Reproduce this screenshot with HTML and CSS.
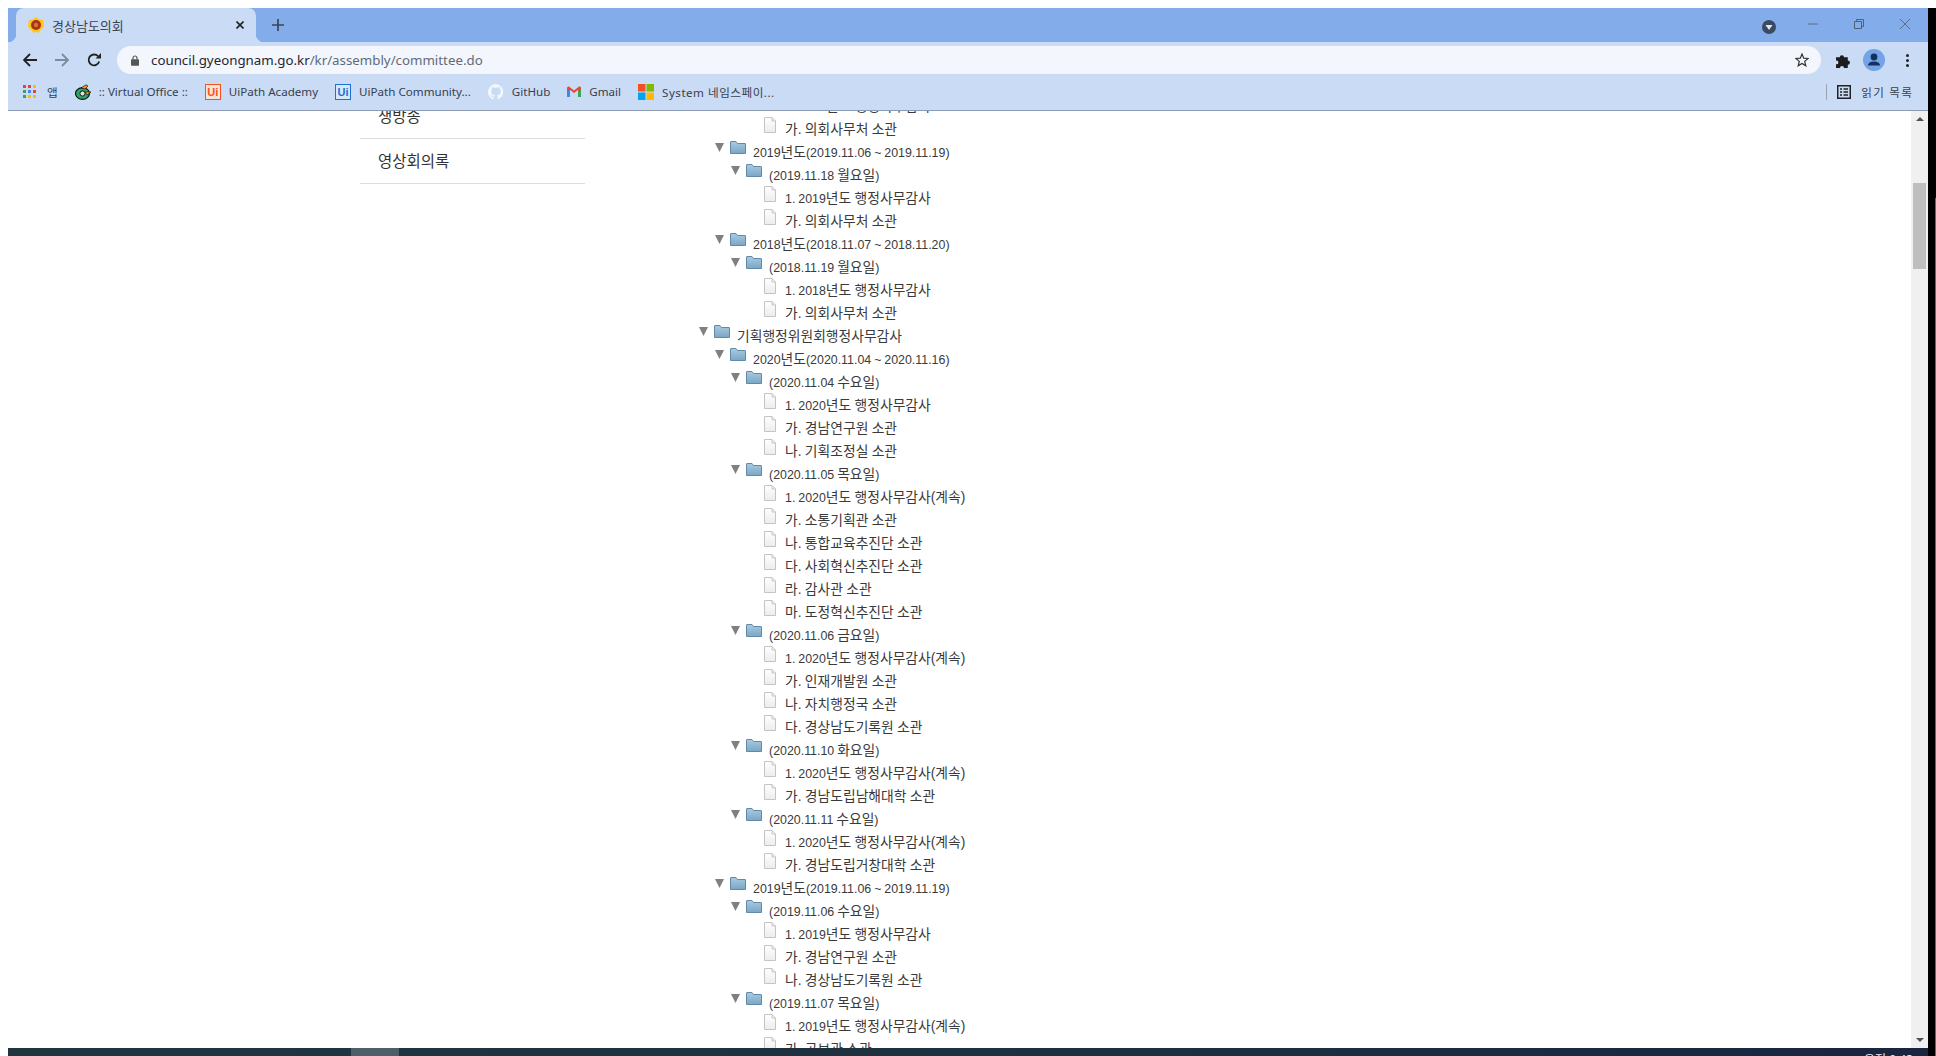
FILE: index.html
```html
<!DOCTYPE html>
<html lang="ko">
<head>
    <meta charset="UTF-8">
    <title>경상남도의회</title>
    <link rel="stylesheet" href="styles.css">
</head>
<body>
    <svg class="defs" width="0" height="0">
        <defs>
            <linearGradient id="folderFill" x1="0" y1="0" x2="0" y2="1">
                <stop offset="0" stop-color="#a9cbe0"/>
                <stop offset="1" stop-color="#7ba6c4"/>
            </linearGradient>
            <linearGradient id="fileFill" x1="0" y1="0" x2="0" y2="1">
                <stop offset="0" stop-color="#ffffff"/>
                <stop offset="1" stop-color="#ececec"/>
            </linearGradient>
            <symbol id="arrow" viewBox="0 0 9 9">
                <path d="M0 0H9L4.5 9Z" fill="#808080"/>
            </symbol>
            <symbol id="folder" viewBox="0 0 16 13">
                <path d="M.5 12.5V1Q.5.5 1 .5H6L7.5 2.5H15Q15.5 2.5 15.5 3V12.5Z" fill="url(#folderFill)" stroke="#5f8aa8"/>
            </symbol>
            <symbol id="file" viewBox="0 0 12 16">
                <path d="M.5.5H8L11.5 4V15.5H.5Z" fill="url(#fileFill)" stroke="#c4c4c4"/>
                <path d="M8 .5V4H11.5" fill="none" stroke="#c4c4c4"/>
            </symbol>
        </defs>
    </svg>

    <div class="frame">
        <div class="browser">
            <!-- 탭 -->
            <div class="tabstrip">
                <div class="tab">
                    <svg class="favicon" viewBox="0 0 16 16">
                        <path d="M8 0L11 2.2 15 3 15.6 7 16 10 12.5 13 10.5 15.8 8 15 5.5 15.8 3.5 13 0 10 .4 7 1 3 5 2.2Z" fill="#fdc90f"/>
                        <circle cx="8" cy="8" r="5" fill="#a8321e"/>
                        <circle cx="8" cy="8" r="2.2" fill="#d8762a"/>
                    </svg>
                    <span class="tab-title">경상남도의회</span>
                    <svg class="tab-close" viewBox="0 0 8 8"><path d="M.5.5L7.5 7.5M7.5.5L.5 7.5" stroke="#222" stroke-width="1.6"/></svg>
                </div>
                <svg class="tab-new" viewBox="0 0 12 12"><path d="M6 0V12M0 6H12" stroke="#3a4555" stroke-width="1.7"/></svg>
                <div class="win-btns">
                    <svg class="profile-drop" viewBox="0 0 14 14"><circle cx="7" cy="7" r="7" fill="#3c4a61"/><path d="M3.5 5H10.5L7 10Z" fill="#dfe8f8"/></svg>
                    <svg class="win-min" viewBox="0 0 10 10"><path d="M0 5H10" stroke="#5a6b85"/></svg>
                    <svg class="win-max" viewBox="0 0 10 10"><path d="M2.5 2.5V.5H9.5V7.5H7.5M.5 2.5H7.5V9.5H.5Z" fill="none" stroke="#4f6078"/></svg>
                    <svg class="win-close" viewBox="0 0 10 10"><path d="M0 0L10 10M10 0L0 10" stroke="#5a6b85"/></svg>
                </div>
            </div>

            <!-- 주소창 -->
            <div class="toolbar">
                <svg class="nav-icon" viewBox="0 0 14 14"><path d="M14 7H1.5M7 1L1 7L7 13" fill="none" stroke="#222" stroke-width="1.8"/></svg>
                <svg class="nav-icon" viewBox="0 0 14 14"><path d="M0 7H12.5M7 1L13 7L7 13" fill="none" stroke="#7f8b9c" stroke-width="1.8"/></svg>
                <svg class="nav-icon" viewBox="0 0 14 14"><path d="M12.2 8.5A5.4 5.4 0 1 1 11 3.2" fill="none" stroke="#222" stroke-width="1.8"/><path d="M8.6 5.4H14V0Z" fill="#222"/></svg>
                <div class="omnibox">
                    <svg class="lock" viewBox="0 0 8 11"><path d="M2 4.5V3A2 2 0 0 1 6 3V4.5" fill="none" stroke="#555" stroke-width="1.2"/><rect y="4.2" width="8" height="6.5" rx=".8" fill="#555"/></svg>
                    <span class="url"><b>council.gyeongnam.go.kr</b>/kr/assembly/committee.do</span>
                    <svg class="star" viewBox="0 0 14 14"><path d="M7 1L8.7 5.2 13.2 5.5 9.7 8.4 10.8 12.8 7 10.4 3.2 12.8 4.3 8.4.8 5.5 5.3 5.2Z" fill="none" stroke="#333" stroke-width="1.2"/></svg>
                </div>
                <svg class="puzzle" viewBox="0 0 14 14"><path d="M0 4H3.5A2 2 0 1 1 7.5 4H11V7A2 2 0 1 1 11 11V14H7.5A1.8 1.8 0 1 0 3.7 14H0V10.5A1.8 1.8 0 1 0 0 7Z" fill="#1c1c1c"/></svg>
                <svg class="avatar" viewBox="0 0 22 22"><circle cx="11" cy="11" r="11" fill="#74a4e6"/><circle cx="11" cy="8" r="3.4" fill="#12315e"/><path d="M4.8 16.5Q5.5 12.6 11 12.6T17.2 16.5Z" fill="#12315e"/></svg>
                <svg class="dots" viewBox="0 0 3 13"><circle cx="1.5" cy="1.5" r="1.5" fill="#222"/><circle cx="1.5" cy="6.5" r="1.5" fill="#222"/><circle cx="1.5" cy="11.5" r="1.5" fill="#222"/></svg>
            </div>

            <!-- 북마크 -->
            <div class="bookmarks">
                <div class="bm">
                    <svg class="bm-apps" viewBox="0 0 13 13">
                        <rect width="3" height="3" fill="#ea4335"/><rect x="5" width="3" height="3" fill="#ea4335"/><rect x="10" width="3" height="3" fill="#fbbc05"/>
                        <rect y="5" width="3" height="3" fill="#34a853"/><rect x="5" y="5" width="3" height="3" fill="#4285f4"/><rect x="10" y="5" width="3" height="3" fill="#ea4335"/>
                        <rect y="10" width="3" height="3" fill="#34a853"/><rect x="5" y="10" width="3" height="3" fill="#fbbc05"/><rect x="10" y="10" width="3" height="3" fill="#fbbc05"/>
                    </svg>
                    <span class="bm-label bm-apps-label">앱</span>
                </div>
                <div class="bm">
                    <svg class="bm-icon" viewBox="0 0 16 16">
                        <ellipse cx="7.5" cy="9.5" rx="7" ry="5.8" fill="#2da66b" stroke="#111" stroke-width="1.2"/>
                        <circle cx="7.5" cy="9.5" r="2.6" fill="#cfe8d8" stroke="#111"/>
                        <path d="M6 4L11 .8 13 2 10 5Z" fill="#f29a1f" stroke="#111" stroke-width=".7"/>
                        <path d="M10 8H16L12 11Z" fill="#f2b01f" stroke="#111" stroke-width=".7"/>
                    </svg>
                    <span class="bm-label">:: Virtual Office ::</span>
                </div>
                <div class="bm">
                    <span class="ui-logo ui-orange">Ui</span>
                    <span class="bm-label">UiPath Academy</span>
                </div>
                <div class="bm">
                    <span class="ui-logo ui-blue">Ui</span>
                    <span class="bm-label">UiPath Community...</span>
                </div>
                <div class="bm">
                    <svg class="bm-icon" viewBox="0 0 16 16"><path d="M8 0A8 8 0 0 0 5.5 15.6V13.2C3.5 13.6 3 12.3 2.7 11.6 2.5 11.2 2 10.7 2.6 10.7 3.4 10.7 3.9 11.5 4.1 11.8 5 13.2 6 12.8 6.5 12.5 6.6 11.9 6.8 11.6 7 11.3 5 11.1 3.2 10.2 3.2 7.2 3.2 6.3 3.5 5.6 4 5 3.9 4.8 3.7 4 4.1 3 4.1 3 4.8 2.8 6.3 3.8A7 7 0 0 1 9.7 3.8C11.2 2.8 11.9 3 11.9 3 12.3 4 12.1 4.8 12 5 12.5 5.6 12.8 6.3 12.8 7.2 12.8 10.2 11 11.1 9 11.3 9.3 11.6 9.6 12.1 9.6 12.9V15.6A8 8 0 0 0 8 0Z" fill="#f4f7fc"/></svg>
                    <span class="bm-label">GitHub</span>
                </div>
                <div class="bm">
                    <svg class="bm-icon bm-gmail" viewBox="0 0 14 11">
                        <path d="M0 2V11H3V4Z" fill="#4285f4"/>
                        <path d="M14 2V11H11V4Z" fill="#34a853"/>
                        <path d="M0 1.5L1.5.2 7 4.5 12.5.2 14 1.5V3L11 5V3.8L7 7 3 3.8V5L0 3Z" fill="#ea4335"/>
                    </svg>
                    <span class="bm-label">Gmail</span>
                </div>
                <div class="bm">
                    <svg class="bm-icon" viewBox="0 0 16 16">
                        <rect width="7.5" height="7.5" fill="#f25022"/><rect x="8.5" width="7.5" height="7.5" fill="#7fba00"/>
                        <rect y="8.5" width="7.5" height="7.5" fill="#00a4ef"/><rect x="8.5" y="8.5" width="7.5" height="7.5" fill="#ffb900"/>
                    </svg>
                    <span class="bm-label bm-wide">System 네임스페이...</span>
                </div>
                <div class="reading">
                    <svg class="bm-reading" viewBox="0 0 14 14"><path d="M.75.75H13.25V13.25H.75Z" fill="none" stroke="#222" stroke-width="1.5"/><path d="M3 4H5M6.5 4H11M3 7H5M6.5 7H11M3 10H5M6.5 10H11" stroke="#222" stroke-width="1.4"/></svg>
                    <span class="bm-label bm-wider">읽기 목록</span>
                </div>
            </div>

            <!-- 페이지 -->
            <div class="viewport">
                <div class="page">
                    <div class="content">
                        <ul class="side-menu">
                            <li>생방송</li>
                            <li>영상회의록</li>
                        </ul>
                        <div class="tree">
                            <div class="node lvl-3"><svg class="ico-file"><use href="#file"/></svg><span><b>1. 2020</b>년도 행정사무감사</span></div>
                            <div class="node lvl-3"><svg class="ico-file"><use href="#file"/></svg><span>가. 의회사무처 소관</span></div>
                            <div class="node lvl-1"><svg class="ico-arrow"><use href="#arrow"/></svg><svg class="ico-folder"><use href="#folder"/></svg><span><b>2019</b>년도<b>(2019.11.06 ~ 2019.11.19)</b></span></div>
                            <div class="node lvl-2"><svg class="ico-arrow"><use href="#arrow"/></svg><svg class="ico-folder"><use href="#folder"/></svg><span><b>(2019.11.18 </b>월요일<b>)</b></span></div>
                            <div class="node lvl-3"><svg class="ico-file"><use href="#file"/></svg><span><b>1. 2019</b>년도 행정사무감사</span></div>
                            <div class="node lvl-3"><svg class="ico-file"><use href="#file"/></svg><span>가. 의회사무처 소관</span></div>
                            <div class="node lvl-1"><svg class="ico-arrow"><use href="#arrow"/></svg><svg class="ico-folder"><use href="#folder"/></svg><span><b>2018</b>년도<b>(2018.11.07 ~ 2018.11.20)</b></span></div>
                            <div class="node lvl-2"><svg class="ico-arrow"><use href="#arrow"/></svg><svg class="ico-folder"><use href="#folder"/></svg><span><b>(2018.11.19 </b>월요일<b>)</b></span></div>
                            <div class="node lvl-3"><svg class="ico-file"><use href="#file"/></svg><span><b>1. 2018</b>년도 행정사무감사</span></div>
                            <div class="node lvl-3"><svg class="ico-file"><use href="#file"/></svg><span>가. 의회사무처 소관</span></div>
                            <div class="node lvl-0"><svg class="ico-arrow"><use href="#arrow"/></svg><svg class="ico-folder"><use href="#folder"/></svg><span>기획행정위원회행정사무감사</span></div>
                            <div class="node lvl-1"><svg class="ico-arrow"><use href="#arrow"/></svg><svg class="ico-folder"><use href="#folder"/></svg><span><b>2020</b>년도<b>(2020.11.04 ~ 2020.11.16)</b></span></div>
                            <div class="node lvl-2"><svg class="ico-arrow"><use href="#arrow"/></svg><svg class="ico-folder"><use href="#folder"/></svg><span><b>(2020.11.04 </b>수요일<b>)</b></span></div>
                            <div class="node lvl-3"><svg class="ico-file"><use href="#file"/></svg><span><b>1. 2020</b>년도 행정사무감사</span></div>
                            <div class="node lvl-3"><svg class="ico-file"><use href="#file"/></svg><span>가. 경남연구원 소관</span></div>
                            <div class="node lvl-3"><svg class="ico-file"><use href="#file"/></svg><span>나. 기획조정실 소관</span></div>
                            <div class="node lvl-2"><svg class="ico-arrow"><use href="#arrow"/></svg><svg class="ico-folder"><use href="#folder"/></svg><span><b>(2020.11.05 </b>목요일<b>)</b></span></div>
                            <div class="node lvl-3"><svg class="ico-file"><use href="#file"/></svg><span><b>1. 2020</b>년도 행정사무감사(계속)</span></div>
                            <div class="node lvl-3"><svg class="ico-file"><use href="#file"/></svg><span>가. 소통기획관 소관</span></div>
                            <div class="node lvl-3"><svg class="ico-file"><use href="#file"/></svg><span>나. 통합교육추진단 소관</span></div>
                            <div class="node lvl-3"><svg class="ico-file"><use href="#file"/></svg><span>다. 사회혁신추진단 소관</span></div>
                            <div class="node lvl-3"><svg class="ico-file"><use href="#file"/></svg><span>라. 감사관 소관</span></div>
                            <div class="node lvl-3"><svg class="ico-file"><use href="#file"/></svg><span>마. 도정혁신추진단 소관</span></div>
                            <div class="node lvl-2"><svg class="ico-arrow"><use href="#arrow"/></svg><svg class="ico-folder"><use href="#folder"/></svg><span><b>(2020.11.06 </b>금요일<b>)</b></span></div>
                            <div class="node lvl-3"><svg class="ico-file"><use href="#file"/></svg><span><b>1. 2020</b>년도 행정사무감사(계속)</span></div>
                            <div class="node lvl-3"><svg class="ico-file"><use href="#file"/></svg><span>가. 인재개발원 소관</span></div>
                            <div class="node lvl-3"><svg class="ico-file"><use href="#file"/></svg><span>나. 자치행정국 소관</span></div>
                            <div class="node lvl-3"><svg class="ico-file"><use href="#file"/></svg><span>다. 경상남도기록원 소관</span></div>
                            <div class="node lvl-2"><svg class="ico-arrow"><use href="#arrow"/></svg><svg class="ico-folder"><use href="#folder"/></svg><span><b>(2020.11.10 </b>화요일<b>)</b></span></div>
                            <div class="node lvl-3"><svg class="ico-file"><use href="#file"/></svg><span><b>1. 2020</b>년도 행정사무감사(계속)</span></div>
                            <div class="node lvl-3"><svg class="ico-file"><use href="#file"/></svg><span>가. 경남도립남해대학 소관</span></div>
                            <div class="node lvl-2"><svg class="ico-arrow"><use href="#arrow"/></svg><svg class="ico-folder"><use href="#folder"/></svg><span><b>(2020.11.11 </b>수요일<b>)</b></span></div>
                            <div class="node lvl-3"><svg class="ico-file"><use href="#file"/></svg><span><b>1. 2020</b>년도 행정사무감사(계속)</span></div>
                            <div class="node lvl-3"><svg class="ico-file"><use href="#file"/></svg><span>가. 경남도립거창대학 소관</span></div>
                            <div class="node lvl-1"><svg class="ico-arrow"><use href="#arrow"/></svg><svg class="ico-folder"><use href="#folder"/></svg><span><b>2019</b>년도<b>(2019.11.06 ~ 2019.11.19)</b></span></div>
                            <div class="node lvl-2"><svg class="ico-arrow"><use href="#arrow"/></svg><svg class="ico-folder"><use href="#folder"/></svg><span><b>(2019.11.06 </b>수요일<b>)</b></span></div>
                            <div class="node lvl-3"><svg class="ico-file"><use href="#file"/></svg><span><b>1. 2019</b>년도 행정사무감사</span></div>
                            <div class="node lvl-3"><svg class="ico-file"><use href="#file"/></svg><span>가. 경남연구원 소관</span></div>
                            <div class="node lvl-3"><svg class="ico-file"><use href="#file"/></svg><span>나. 경상남도기록원 소관</span></div>
                            <div class="node lvl-2"><svg class="ico-arrow"><use href="#arrow"/></svg><svg class="ico-folder"><use href="#folder"/></svg><span><b>(2019.11.07 </b>목요일<b>)</b></span></div>
                            <div class="node lvl-3"><svg class="ico-file"><use href="#file"/></svg><span><b>1. 2019</b>년도 행정사무감사(계속)</span></div>
                            <div class="node lvl-3"><svg class="ico-file"><use href="#file"/></svg><span>가. 공보관 소관</span></div>
                        </div>
                    </div>
                </div>
                <div class="scrollbar">
                    <span class="sb-up"></span>
                    <div class="sb-track"><div class="sb-thumb"></div></div>
                    <span class="sb-down"></span>
                </div>
            </div>

            <div class="taskbar">
                <div class="task-active"></div>
                <span class="clock">오전 9:43</span>
            </div>
        </div>
        <div class="screen-edge"></div>
    </div>
</body>
</html>
```

FILE: styles.css
```css
* {
    box-sizing: border-box;
}

html, body {
    height: 100%;
}

body {
    margin: 0;
    background-color: white;
    overflow: hidden;
    font-family: "Noto Sans", "Noto Sans CJK KR", sans-serif;
}

ul {
    margin: 0;
    padding: 0;
    list-style: none;
}

svg {
    display: block;
    flex: none;
}

.defs {
    position: absolute;
}

.frame {
    display: flex;
    height: 100%;
    padding: 8px 0 0 8px;
}

.browser {
    display: flex;
    flex-direction: column;
    width: 1920px;
    height: 1048px;
}

/* 탭 */
.tabstrip {
    display: flex;
    align-items: center;
    height: 34px;
    padding-left: 8px;
    background-color: #83acea;
}

.tab {
    position: relative;
    display: flex;
    align-items: center;
    width: 240px;
    height: 34px;
    padding-left: 12px;
    border-radius: 8px 8px 0 0;
    background-color: #cadbf6;
}

.tab::before,
.tab::after {
    content: "";
    position: absolute;
    bottom: 0;
    width: 8px;
    height: 8px;
}

.tab::before {
    left: -8px;
    background: radial-gradient(circle at 0 0, transparent 8px, #cadbf6 8.5px);
}

.tab::after {
    right: -8px;
    background: radial-gradient(circle at 100% 0, transparent 8px, #cadbf6 8.5px);
}

.favicon {
    width: 16px;
    height: 16px;
}

.tab-title {
    width: 184px;
    margin-left: 8px;
    font-size: 13px;
    color: #3c4350;
}

.tab-close {
    width: 8px;
    height: 8px;
}

.tab-new {
    width: 12px;
    height: 12px;
    margin-left: 16px;
}

.win-btns {
    display: flex;
    align-items: center;
    margin-left: auto;
    padding-right: 18px;
}

.profile-drop {
    width: 14px;
    height: 14px;
    margin-right: 32px;
    margin-top: 3px;
}

.win-min,
.win-max,
.win-close {
    width: 10px;
    height: 10px;
    margin-top: -3px;
}

.win-min,
.win-max {
    margin-right: 36px;
}

/* 주소창 */
.toolbar {
    display: flex;
    align-items: center;
    height: 36px;
    padding-left: 15px;
    background-color: #cadbf6;
}

.nav-icon {
    width: 14px;
    height: 14px;
    margin-right: 18px;
}

.omnibox {
    display: flex;
    align-items: center;
    width: 1704px;
    height: 28px;
    margin-left: -2px;
    padding: 0 12px 0 14px;
    border-radius: 14px;
    background-color: #f3f6fc;
}

.lock {
    width: 8px;
    height: 11px;
}

.url {
    margin-left: 12px;
    font-size: 13.3px;
    color: #5f6b7a;
}

.url b {
    font-weight: normal;
    color: #1f2630;
}

.star {
    width: 14px;
    height: 14px;
    margin-left: auto;
}

.puzzle {
    width: 15px;
    height: 15px;
    margin-left: 15px;
}

.avatar {
    width: 22px;
    height: 22px;
    margin-left: 12px;
}

.dots {
    width: 3px;
    height: 13px;
    margin-left: 21px;
}

/* 북마크 */
.bookmarks {
    display: flex;
    align-items: center;
    gap: 17px;
    height: 33px;
    padding: 0 0 5px 15px;
    border-bottom: 1px solid #8f9bb0;
    background-color: #cadbf6;
}

.bm {
    display: flex;
    align-items: center;
    gap: 8px;
}

.bm-apps {
    width: 13px;
    height: 13px;
}

.bm-apps-label {
    margin-left: 3px;
}

.bm-icon {
    width: 16px;
    height: 16px;
}

.bm-gmail {
    width: 14px;
    height: 11px;
}

.bm-label {
    font-size: 11.6px;
    color: #38404c;
}

.bm-wide {
    letter-spacing: .5px;
}

.bm-wider {
    letter-spacing: 1.2px;
}

.ui-logo {
    display: flex;
    align-items: center;
    justify-content: center;
    width: 16px;
    height: 16px;
    border: 1.5px solid;
    font-family: "Liberation Sans", sans-serif;
    font-size: 11px;
    font-weight: bold;
}

.ui-orange {
    color: #f4511e;
    background-color: #fbe3d8;
}

.ui-blue {
    color: #1f6fd8;
    background-color: #d8e8fb;
}

.reading {
    display: flex;
    align-items: center;
    gap: 10px;
    height: 16px;
    margin-left: auto;
    padding-left: 10px;
    padding-right: 15px;
    border-left: 1px solid #98a4b6;
}

.bm-reading {
    width: 14px;
    height: 14px;
}

/* 페이지 */
.viewport {
    display: flex;
    height: 937px;
    background-color: white;
}

.page {
    flex: 1;
    overflow: hidden;
}

.content {
    display: flex;
    margin-top: -17px;
    padding-left: 352px;
}

.side-menu {
    width: 225px;
    font-size: 15.5px;
    color: #333;
}

.side-menu li {
    display: flex;
    align-items: center;
    height: 45px;
    padding: 0 0 2px 18px;
    border-bottom: 1px solid #ddd;
}

.tree {
    padding-left: 114px;
    font-family: "Liberation Sans", "Noto Sans CJK KR", sans-serif;
    font-size: 13.8px;
    word-spacing: -.5px;
    color: #3a3a3a;
}

.node {
    display: flex;
    align-items: center;
    height: 23px;
    white-space: nowrap;
}

.node span {
    margin-bottom: 2px;
    margin-left: 7px;
}

/* 숫자는 한글보다 작게 */
.node b {
    font-size: 12.4px;
    font-weight: normal;
}

.lvl-1 {
    padding-left: 16px;
}

.lvl-2 {
    padding-left: 32px;
}

.lvl-3 {
    padding-left: 65px;
}

.ico-arrow {
    width: 9px;
    height: 9px;
    margin-right: 6px;
    margin-bottom: 9px;
}

.ico-folder {
    width: 16px;
    height: 13px;
    margin-bottom: 8px;
}

.ico-file {
    width: 12px;
    height: 16px;
    margin-bottom: 8px;
}

.ico-file + span {
    margin-left: 9px;
}

/* 스크롤바 */
.scrollbar {
    display: flex;
    flex-direction: column;
    align-items: center;
    width: 17px;
    background-color: #f0f0f0;
}

.sb-up,
.sb-down {
    flex: none;
    width: 0;
    height: 0;
    border-left: 4px solid transparent;
    border-right: 4px solid transparent;
}

.sb-up {
    margin-top: 6px;
    border-bottom: 4px solid #505050;
}

.sb-down {
    margin-bottom: 6px;
    border-top: 4px solid #505050;
}

.sb-track {
    flex: 1;
    width: 100%;
    padding: 62px 2px 0;
}

.sb-thumb {
    height: 86px;
    background-color: #bfbfbf;
}

/* 작업표시줄 */
.taskbar {
    position: relative;
    flex: none;
    height: 8px;
    overflow: hidden;
    background: linear-gradient(90deg, #20363f, #1c3040 60%, #1a2540);
}

.task-active {
    width: 48px;
    height: 8px;
    margin-left: 343px;
    background-color: #4d5f67;
}

.clock {
    position: absolute;
    top: 2px;
    right: 15px;
    font-size: 12px;
    color: #eef;
}

.screen-edge {
    flex: 1;
    background: linear-gradient(90deg, #000 7px, #0b86c9 7px);
    background-size: 100% calc(100% - 190px);
    background-position: 0 100%;
    background-repeat: no-repeat;
    background-color: #000;
}
```
